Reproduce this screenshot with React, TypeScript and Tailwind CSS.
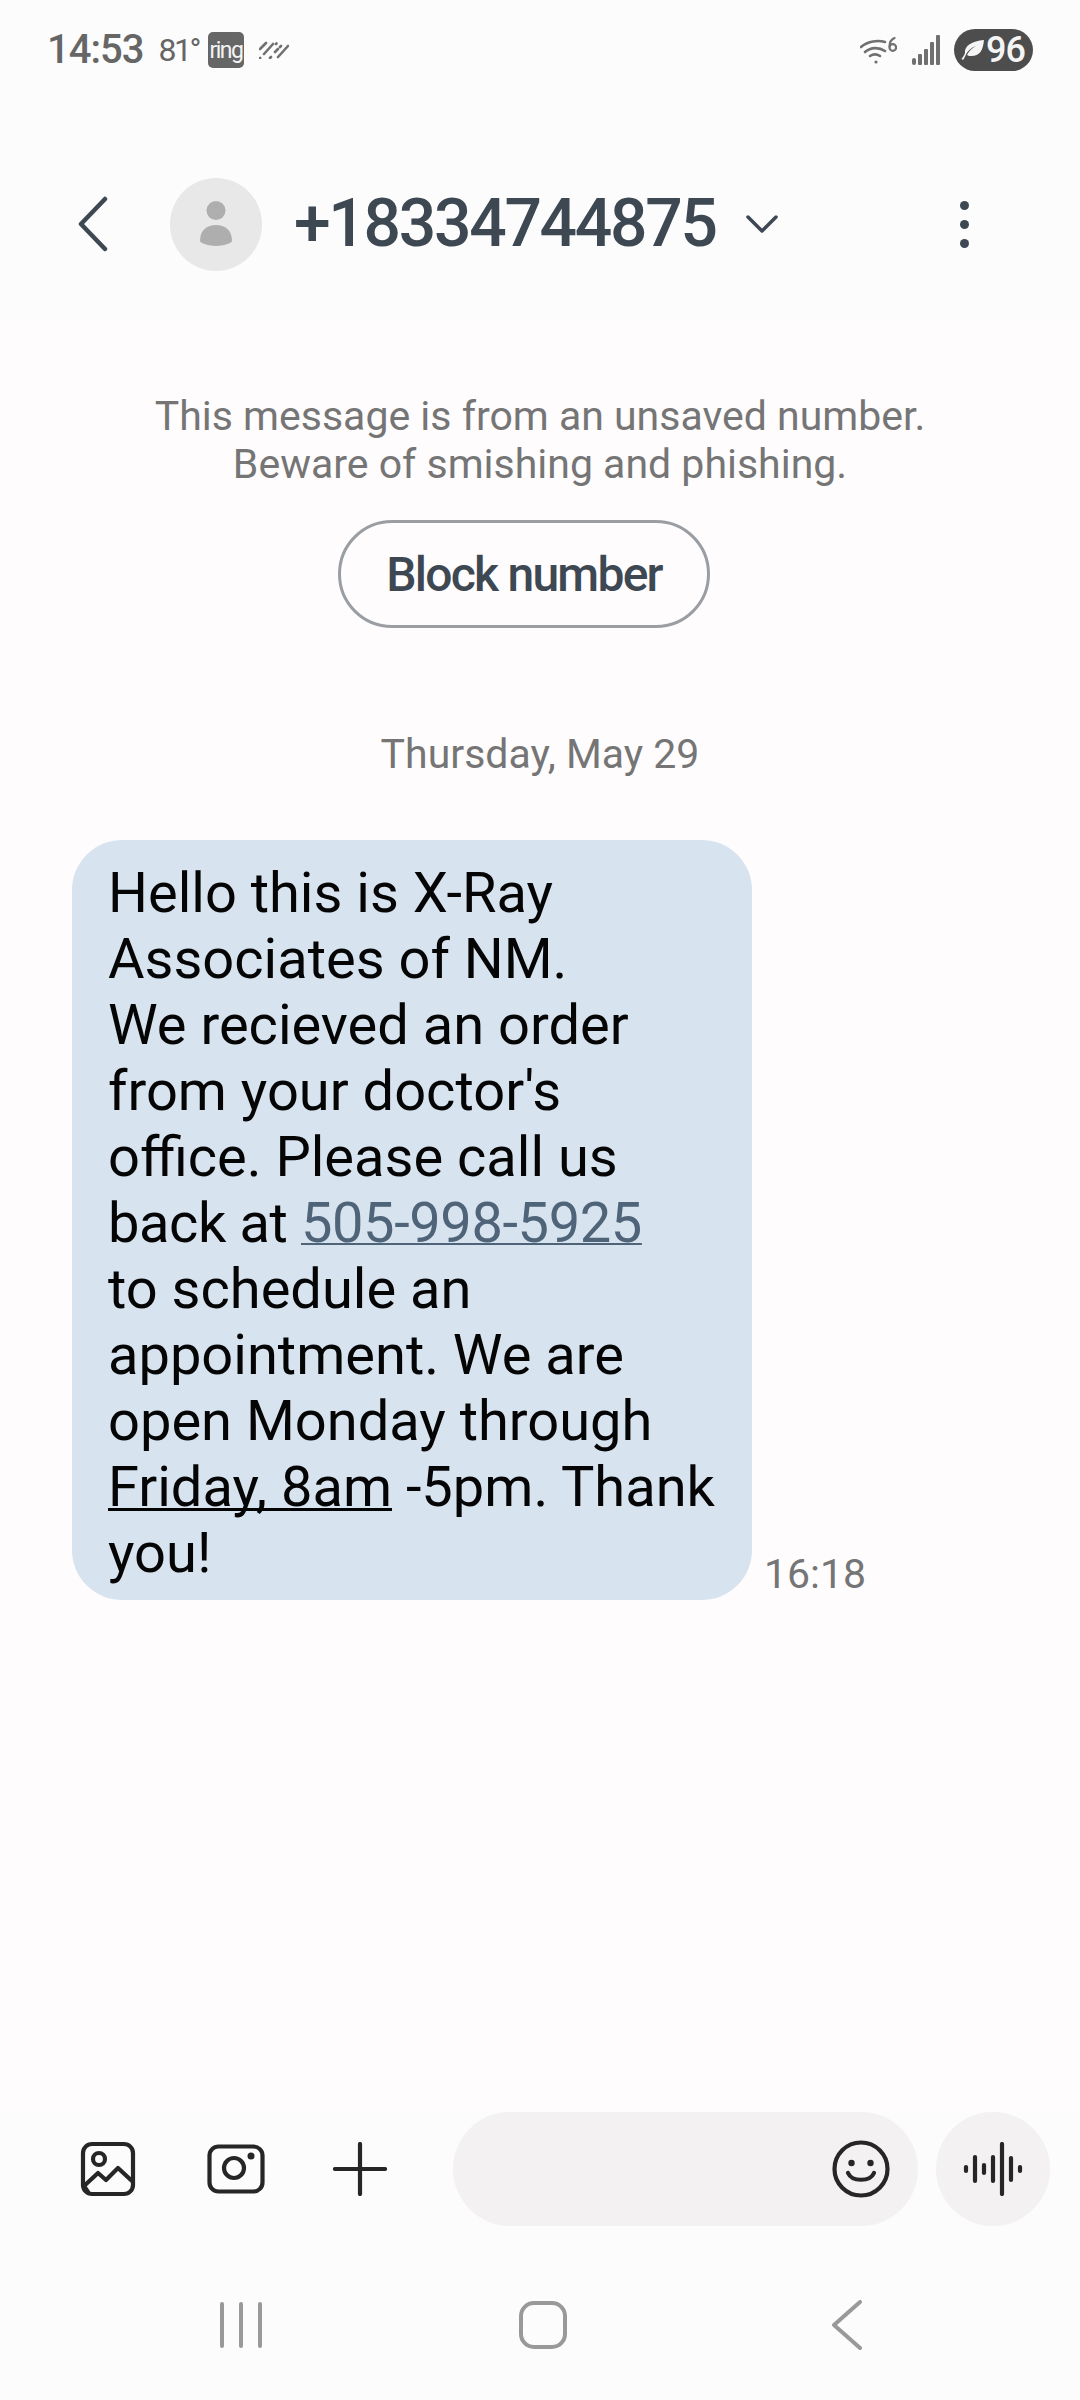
import React from "react";

const LINES = [
  "Hello this is X-Ray",
  "Associates of NM.",
  "We recieved an order",
  "from your doctor's",
  "office. Please call us",
];

function StatusBar() {
  return (
    <div className="flex h-[100px] items-center pl-[47px] pr-[47px] text-[#666666]">
      <span className="text-[40px] font-medium leading-none tracking-[-1px]">14:53</span>
      <span className="ml-[15px] text-[32px] leading-none tracking-[-2.5px]">81°</span>
      <span className="ml-[9px] flex h-[36px] w-[36px] items-center justify-center rounded-[5px] bg-[#666666] text-[23px] leading-none tracking-[-1.5px] text-[#f4f4f4]">
        ring
      </span>
      <svg className="ml-[15px]" width="30" height="18" viewBox="0 0 30 18" fill="none" stroke="#707070" strokeWidth="2.6" strokeLinecap="round">
        <path d="M1 8 7 2M1 17 1.2 16.8M5 13 14 3M11 17 12 16M16 11 19 8M21 6 22 5M19 16 29 5M17 3 17.5 2.5" />
      </svg>
      <div className="flex-1" />
      <svg width="37" height="27" viewBox="0 0 37 27" fill="none" stroke="#707070" strokeWidth="2.6" strokeLinecap="round">
        <path d="M1 10C8 4 18 3 25 5" />
        <path d="M5 15C11 10 19 10 25 14" />
        <path d="M10 19C13 17 17 17 20 19" />
        <circle cx="16" cy="25" r="1.6" fill="#707070" stroke="none" />
        <path d="M34.500 1C31 2.500 29.500 6 29.500 9.500" strokeWidth="2.2" />
        <circle cx="32.800" cy="10.500" r="3.300" strokeWidth="2.2" />
      </svg>
      <svg className="ml-[15px]" width="28" height="30" viewBox="0 0 28 30" fill="#707070">
        <rect x="0" y="23" width="4" height="7" rx="2" />
        <rect x="6" y="19" width="4" height="11" rx="1" />
        <rect x="12" y="14" width="4" height="16" rx="1" />
        <rect x="18" y="7" width="4" height="23" rx="1" />
        <rect x="24" y="0" width="4" height="30" rx="1" />
      </svg>
      <div className="ml-[14px] flex h-[42px] w-[79px] items-center rounded-full bg-[#4d4d4d] pl-[7px] text-[#f5f5f5]">
        <svg width="24" height="24" viewBox="0 0 24 24" fill="#f5f5f5">
          <path d="M23 2C22 11 20 18 10 18 8 18 6.500 17.500 6 17 8 13 11 10 15 8 10 9.500 6.500 13 4.500 17.500 4 18.500 3 21 2 22L0.500 21C2 19 3 17.500 4 15 3 8 11 3 23 2Z" />
        </svg>
        <span className="ml-[1px] text-[36px] font-medium leading-none tracking-[-1px]">96</span>
      </div>
    </div>
  );
}

function Header() {
  return (
    <header className="flex h-[220px] items-center pl-[77px] pt-[28px] text-[#3d4852]">
      <svg width="32" height="56" viewBox="0 0 32 56" fill="none" stroke="#3d4852" strokeWidth="4.500" strokeLinecap="round" strokeLinejoin="round">
        <path d="M28 3 4 28 28 53" />
      </svg>
      <div className="ml-[61px] flex h-[93px] w-[92px] shrink-0 items-center justify-center rounded-full bg-[#e8e8e8]">
        <svg width="34" height="46" viewBox="0 0 34 46" fill="#aeaeae">
          <circle cx="17" cy="9.500" r="9.500" />
          <path d="M1 40C1 29 8 24 17 24 26 24 33 29 33 40 33 42 24 45 17 45 10 45 1 42 1 40Z" />
        </svg>
      </div>
      <h1 className="ml-[32px] text-[66px] font-medium leading-none tracking-[-2.3px]">+18334744875</h1>
      <svg className="ml-[30px]" width="32" height="20" viewBox="0 0 32 20" fill="none" stroke="#3d4852" strokeWidth="3.500" strokeLinecap="round" strokeLinejoin="round">
        <path d="M2 3 16 17 30 3" />
      </svg>
      <div className="ml-[182px] flex flex-col gap-[10px]">
        <span className="h-[9px] w-[9px] rounded-full bg-[#3d4852]" />
        <span className="h-[9px] w-[9px] rounded-full bg-[#3d4852]" />
        <span className="h-[9px] w-[9px] rounded-full bg-[#3d4852]" />
      </div>
    </header>
  );
}

function Composer() {
  return (
    <div className="flex h-[114px] items-center pl-[80px] pr-[28px]">
      <svg width="56" height="56" viewBox="0 0 56 56" fill="none" stroke="#262626" strokeWidth="4.200" strokeLinecap="round" strokeLinejoin="round">
        <rect x="3" y="3" width="50" height="50" rx="9" />
        <circle cx="19" cy="18" r="6" />
        <path d="M4 45 18 32 26 39 38 27 52 40" />
        <path d="M4 45 8 51" />
      </svg>
      <svg className="ml-[71px]" width="58" height="50" viewBox="0 0 58 50" fill="none" stroke="#262626" strokeWidth="4.200" strokeLinecap="round">
        <rect x="2.500" y="2.500" width="53" height="45" rx="9" />
        <circle cx="27" cy="24" r="10" />
        <circle cx="44" cy="12" r="3.500" fill="#262626" stroke="none" />
      </svg>
      <svg className="ml-[68px]" width="54" height="54" viewBox="0 0 54 54" fill="none" stroke="#262626" strokeWidth="4.200" strokeLinecap="round">
        <path d="M27 2V52M2 27H52" />
      </svg>
      <div className="ml-[66px] flex h-[114px] w-[465px] items-center justify-end rounded-full bg-[#f3f1f2] pr-[28px]">
        <svg width="58" height="58" viewBox="0 0 58 58" fill="none" stroke="#262626" strokeWidth="4.200" strokeLinecap="round">
          <circle cx="29" cy="29" r="26.500" />
          <circle cx="19.500" cy="23" r="3.200" fill="#262626" stroke="none" />
          <circle cx="38.500" cy="23" r="3.200" fill="#262626" stroke="none" />
          <path d="M16 33C20 42 38 42 42 33" />
        </svg>
      </div>
      <div className="ml-[18px] flex h-[114px] w-[114px] items-center justify-center rounded-full bg-[#f3f1f2]">
        <svg width="60" height="54" viewBox="0 0 60 54" fill="none" stroke="#262626" strokeWidth="4.200" strokeLinecap="round">
          <path d="M3 25V29M12 15V39M21 23V31M30 15V39M39 2V52M48 16V38M57 25V29" />
        </svg>
      </div>
    </div>
  );
}

function NavBar() {
  return (
    <nav className="flex h-[174px] items-center pl-[220px] pt-[24px]">
      <svg width="42" height="46" viewBox="0 0 42 46" fill="#999999">
        <rect x="0" y="0" width="4" height="46" rx="2" />
        <rect x="19" y="0" width="4" height="46" rx="2" />
        <rect x="38" y="0" width="4" height="46" rx="2" />
      </svg>
      <span className="ml-[257px] h-[48px] w-[48px] rounded-[15px] border-[4px] border-[#999999]" />
      <svg className="ml-[264px]" width="32" height="50" viewBox="0 0 32 50" fill="none" stroke="#999999" strokeWidth="4" strokeLinecap="round" strokeLinejoin="round">
        <path d="M29 2 3 25 29 48" />
      </svg>
    </nav>
  );
}

export default function App() {
  return (
    <div className="flex h-[2400px] w-[1080px] flex-col overflow-hidden bg-[#fefcfd] font-['Roboto',sans-serif]">
      <div className="bg-[#fcfcfc]">
        <StatusBar />
        <Header />
      </div>

      <main className="flex-1">
        <p className="mt-[72px] text-center text-[41px] leading-[48px] text-[#757575]">
          This message is from an unsaved number.
          <br />
          Beware of smishing and phishing.
        </p>
        <div className="mt-[32px] flex justify-center pr-[32px]">
          <button className="flex h-[108px] w-[372px] items-center justify-center rounded-full border-[3px] border-[#9a9da1] pt-[1px] text-[48px] font-medium tracking-[-1.75px] text-[#3d4852]">
            Block number
          </button>
        </div>
        <p className="mt-[102px] text-center text-[41px] leading-[48px] text-[#757575]">
          Thursday, May 29
        </p>
        <div className="mt-[62px] ml-[72px] flex items-end">
          <div className="w-[680px] rounded-[50px] bg-[#d7e3ef] pb-[14px] pl-[36px] pt-[20px] text-[56px] leading-[66px] text-[#050505]">
            {LINES.map((line) => (
              <div key={line}>{line}</div>
            ))}
            <div className="tracking-[-0.4px]">
              back at <span className="text-[#4f6478] underline decoration-2 [text-decoration-skip-ink:none]">505-998-5925</span>
            </div>
            <div>to schedule an</div>
            <div>appointment. We are</div>
            <div>open Monday through</div>
            <div>
              <span className="underline decoration-[3px] [text-decoration-skip-ink:none]">Friday, 8am</span> -5pm. Thank
            </div>
            <div>you!</div>
          </div>
          <span className="mb-[2px] ml-[12px] text-[41px] leading-[48px] text-[#757575]">16:18</span>
        </div>
      </main>

      <div className="bg-[#fcfcfc]">
        <Composer />
        <NavBar />
      </div>
    </div>
  );
}
